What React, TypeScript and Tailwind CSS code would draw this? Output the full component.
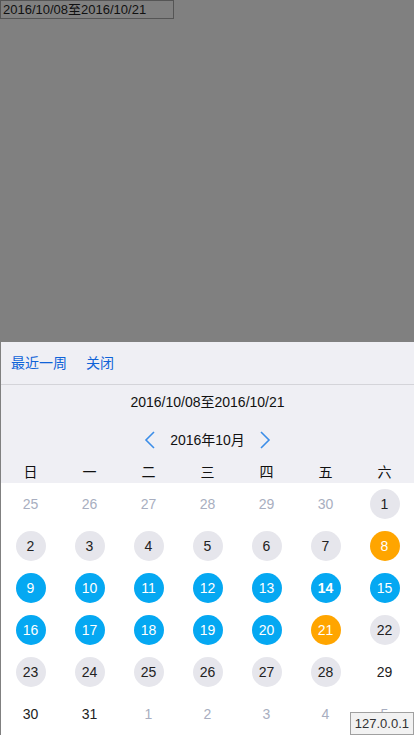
import React from "react";

type Day = { n: number; kind: "muted" | "grey" | "blue" | "orange" | "plain"; bold?: boolean };

const rows: Day[][] = [
  [
    { n: 25, kind: "muted" }, { n: 26, kind: "muted" }, { n: 27, kind: "muted" }, { n: 28, kind: "muted" },
    { n: 29, kind: "muted" }, { n: 30, kind: "muted" }, { n: 1, kind: "grey" },
  ],
  [
    { n: 2, kind: "grey" }, { n: 3, kind: "grey" }, { n: 4, kind: "grey" }, { n: 5, kind: "grey" },
    { n: 6, kind: "grey" }, { n: 7, kind: "grey" }, { n: 8, kind: "orange" },
  ],
  [
    { n: 9, kind: "blue" }, { n: 10, kind: "blue" }, { n: 11, kind: "blue" }, { n: 12, kind: "blue" },
    { n: 13, kind: "blue" }, { n: 14, kind: "blue", bold: true }, { n: 15, kind: "blue" },
  ],
  [
    { n: 16, kind: "blue" }, { n: 17, kind: "blue" }, { n: 18, kind: "blue" }, { n: 19, kind: "blue" },
    { n: 20, kind: "blue" }, { n: 21, kind: "orange" }, { n: 22, kind: "grey" },
  ],
  [
    { n: 23, kind: "grey" }, { n: 24, kind: "grey" }, { n: 25, kind: "grey" }, { n: 26, kind: "grey" },
    { n: 27, kind: "grey" }, { n: 28, kind: "grey" }, { n: 29, kind: "plain" },
  ],
  [
    { n: 30, kind: "plain" }, { n: 31, kind: "plain" }, { n: 1, kind: "muted" }, { n: 2, kind: "muted" },
    { n: 3, kind: "muted" }, { n: 4, kind: "muted" }, { n: 5, kind: "muted" },
  ],
];

const weekdays = ["日", "一", "二", "三", "四", "五", "六"];

function DayCell({ d }: { d: Day }) {
  const cls =
    d.kind === "grey"
      ? "bg-[#e6e6ec] text-[#222222]"
      : d.kind === "blue"
      ? "bg-[#05a8f2] text-white"
      : d.kind === "orange"
      ? "bg-[#ffa500] text-white"
      : d.kind === "muted"
      ? "text-[#a8aec0]"
      : "text-[#222222]";
  return (
    <div className="flex h-[42px] items-center justify-center">
      <div
        className={`flex h-[30px] w-[30px] items-center justify-center rounded-full text-[14px] ${cls} ${
          d.bold ? "font-bold" : ""
        }`}
      >
        {d.n}
      </div>
    </div>
  );
}

export default function App() {
  return (
    <div
      className="relative flex h-[735px] w-[414px] flex-col overflow-hidden bg-[#808080]"
      style={{ fontFamily: '"Liberation Sans", "Noto Sans CJK SC", sans-serif' }}
    >
      <div className="h-[342px]">
        <div className="flex h-[19px] w-[174px] items-center border border-[#555555] pl-[2px] text-[13px] leading-none text-[#111111]">
          2016/10/08至2016/10/21
        </div>
      </div>
      <div className="ml-px flex flex-1 flex-col bg-[#efeff4]">
        <div className="flex h-[43px] items-center gap-[19px] border-b border-[#d4d4d9] pl-[10px] text-[14px] text-[#0f63d8]">
          <span>最近一周</span>
          <span>关闭</span>
        </div>
        <div className="flex h-[35px] items-center justify-center text-[14px] text-[#111111]">
          2016/10/08至2016/10/21
        </div>
        <div className="flex h-[40px] items-center justify-center text-[14px] text-[#111111]">
          <svg width="12" height="18" viewBox="0 0 12 18" className="mr-[14px]">
            <path d="M10 1 L2 9 L10 17" fill="none" stroke="#3b8de8" strokeWidth="1.6" />
          </svg>
          <span>2016年10月</span>
          <svg width="12" height="18" viewBox="0 0 12 18" className="ml-[14px]">
            <path d="M2 1 L10 9 L2 17" fill="none" stroke="#3b8de8" strokeWidth="1.6" />
          </svg>
        </div>
        <div className="grid h-[23px] grid-cols-7 items-center text-[14px] text-[#111111]">
          {weekdays.map((w) => (
            <div key={w} className="text-center leading-none">
              {w}
            </div>
          ))}
        </div>
        <div className="flex-1 bg-white">
          {rows.map((r, i) => (
            <div key={i} className="grid grid-cols-7">
              {r.map((d, j) => (
                <DayCell key={j} d={d} />
              ))}
            </div>
          ))}
        </div>
      </div>
      <div className="absolute bottom-0 right-0 flex h-[23px] items-center border border-[#a0a0a0] bg-[#f2f2f2] px-[4px] text-[13px] text-[#333333]">
        127.0.0.1
      </div>
    </div>
  );
}
